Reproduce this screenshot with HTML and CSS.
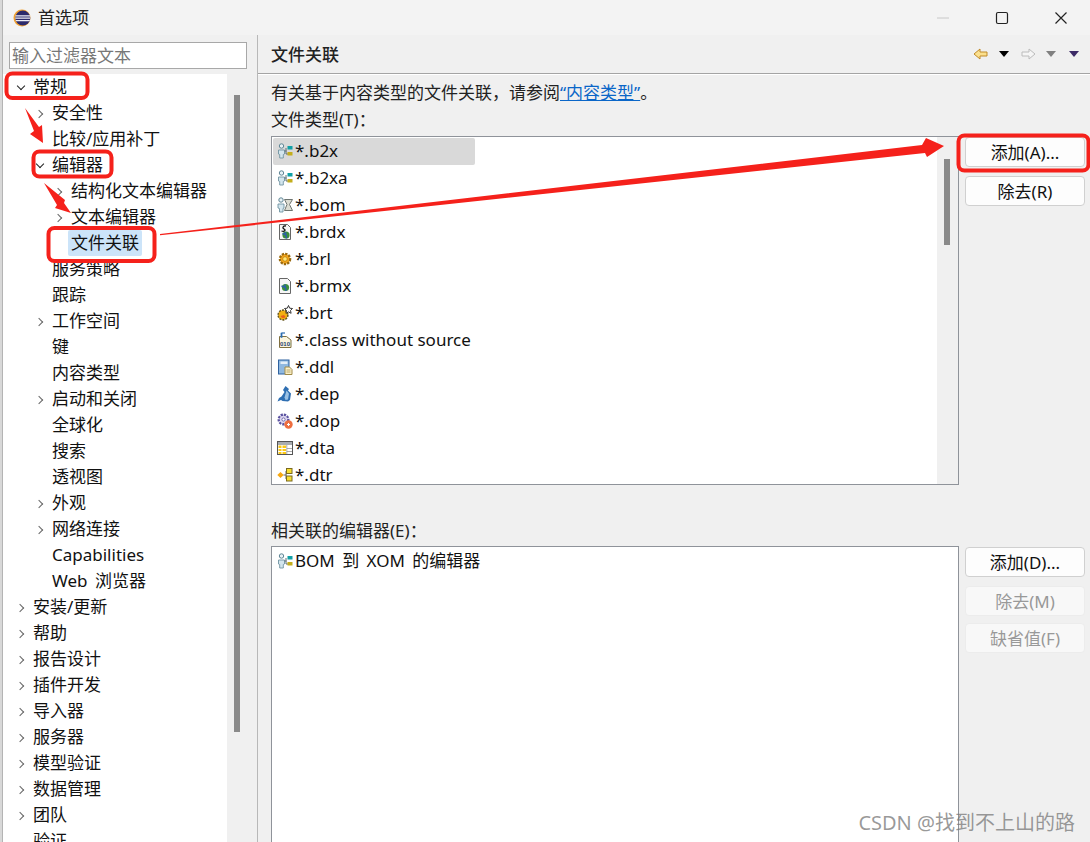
FILE: index.html
```html
<!DOCTYPE html>
<html lang="zh-CN">
<head>
    <meta charset="UTF-8">
    <title>首选项</title>
    <link rel="stylesheet" href="styles.css">
</head>
<body>
    <svg class="defs" width="0" height="0">
        <symbol id="i-person" viewBox="0 0 16 16">
            <circle cx="4.500" cy="3" r="2.200" fill="#e8f2f6" stroke="#5f8494"/>
            <path d="M1.500 7h6v4l-1.200 .5V15H2.700v-3.500L1.500 11z" fill="#d4e6ee" stroke="#6f93a2" stroke-width=".9"/>
            <path d="M7.500 8h2M9 5v6h2" fill="none" stroke="#5f6c72"/>
            <rect x="10.500" y="3" width="5" height="3.500" fill="#10a0a6"/>
            <rect x="10.500" y="9" width="5" height="3.500" fill="#c4ae1c"/>
        </symbol>
    </svg>

    <div class="dialog">
        <header class="titlebar">
            <svg class="app-icon" viewBox="0 0 18 18" width="18" height="18">
                <circle cx="9" cy="9" r="8.500" fill="#f0a030"/>
                <circle cx="9.800" cy="9" r="7.500" fill="#2c2a6b"/>
                <path d="M2.500 6.800h14.500M2.300 9.200h15M2.800 11.600h14" stroke="#eeeef6" stroke-width="1.300"/>
            </svg>
            <span class="title">首选项</span>
            <div class="win-controls">
                <svg width="14" height="14" viewBox="0 0 14 14"><path d="M1 7h12" stroke="#c8c8c8"/></svg>
                <svg width="14" height="14" viewBox="0 0 14 14"><rect x="1.500" y="1.500" width="11" height="11" rx="1.500" fill="none" stroke="#222" stroke-width="1.200"/></svg>
                <svg width="14" height="14" viewBox="0 0 14 14"><path d="M1.500 1.500l11 11M12.500 1.500l-11 11" stroke="#222" stroke-width="1.200"/></svg>
            </div>
        </header>

        <div class="main">
            <aside class="sidebar">
                <input class="filter" type="text" placeholder="输入过滤器文本">
                <div class="tree-wrap">
                    <ul class="tree">
                        <li class="lv0 open">常规</li>
                        <li class="lv1 closed">安全性</li>
                        <li class="lv1">比较/应用补丁</li>
                        <li class="lv1 open">编辑器</li>
                        <li class="lv2 closed">结构化文本编辑器</li>
                        <li class="lv2 closed">文本编辑器</li>
                        <li class="lv2"><span class="current">文件关联</span></li>
                        <li class="lv1">服务策略</li>
                        <li class="lv1">跟踪</li>
                        <li class="lv1 closed">工作空间</li>
                        <li class="lv1">键</li>
                        <li class="lv1">内容类型</li>
                        <li class="lv1 closed">启动和关闭</li>
                        <li class="lv1">全球化</li>
                        <li class="lv1">搜索</li>
                        <li class="lv1">透视图</li>
                        <li class="lv1 closed">外观</li>
                        <li class="lv1 closed">网络连接</li>
                        <li class="lv1">Capabilities</li>
                        <li class="lv1 spaced">Web 浏览器</li>
                        <li class="lv0 closed">安装/更新</li>
                        <li class="lv0 closed">帮助</li>
                        <li class="lv0 closed">报告设计</li>
                        <li class="lv0 closed">插件开发</li>
                        <li class="lv0 closed">导入器</li>
                        <li class="lv0 closed">服务器</li>
                        <li class="lv0 closed">模型验证</li>
                        <li class="lv0 closed">数据管理</li>
                        <li class="lv0 closed">团队</li>
                        <li class="lv0">验证</li>
                    </ul>
                    <div class="scrollbar tree-scroll"><div class="thumb"></div></div>
                </div>
            </aside>

            <section class="content">
                <div class="content-head">
                    <h1>文件关联</h1>
                    <div class="nav-icons">
                        <svg width="16" height="14" viewBox="0 0 16 14"><path d="M1 7l6-5v3h7v4H7v3z" fill="#fbe08e" stroke="#c08a28"/></svg>
                        <i class="tri black"></i>
                        <svg class="nav-fwd" width="16" height="14" viewBox="0 0 16 14"><path d="M15 7L9 2v3H2v4h7v3z" fill="#f5f5f5" stroke="#bcbcbc"/></svg>
                        <i class="tri gray"></i>
                        <i class="tri purple"></i>
                    </div>
                </div>

                <div class="content-body">
                    <p class="intro">有关基于内容类型的文件关联，请参阅<a href="#">“内容类型”</a>。</p>
                    <div class="label types-label">文件类型(T)：</div>
                    <div class="pane types-pane">
                        <div class="listbox types">
                            <ul class="items">
                                <li class="selected"><svg class="ic"><use href="#i-person"/></svg>*.b2x</li>
                                <li><svg class="ic"><use href="#i-person"/></svg>*.b2xa</li>
                                <li><svg class="ic" viewBox="0 0 16 16"><circle cx="4" cy="3" r="2.200" fill="#e8f2f6" stroke="#5f8494"/><path d="M1 7h6v4l-1 .5V15H2.500v-3.500L1 11z" fill="#d4e6ee" stroke="#6f93a2" stroke-width=".9"/><path d="M7.500 2.500h8l-3 5 3 6h-8l2.500-6z" fill="#dcdcd2" stroke="#6d7470"/></svg>*.bom</li>
                                <li><svg class="ic" viewBox="0 0 16 16"><path d="M2.500 .5h8l3 3v12h-11z" fill="#f6f6f6" stroke="#666"/><path d="M9 2C6 1.500 5 4 7 5s1 3-2.500 2" fill="none" stroke="#111" stroke-width="1.300"/><circle cx="9" cy="11" r="3.600" fill="#3a8f38"/><path d="M5.500 9.500l3.500 1.500.5 3.500M8.500 8v3" stroke="#2e60a8" stroke-width="1.600" fill="none"/></svg>*.brdx</li>
                                <li><svg class="ic" viewBox="0 0 16 16"><circle cx="8" cy="8" r="5" fill="#f6a81c" stroke="#9a6a10" stroke-width="2.600" stroke-dasharray="2.200 1.100"/><circle cx="8" cy="8" r="3.800" fill="#f6a81c"/><circle cx="8" cy="8" r="2.300" fill="#ffe878" stroke="#b87a10" stroke-width=".8"/></svg>*.brl</li>
                                <li><svg class="ic" viewBox="0 0 16 16"><path d="M2.500 .5h8l3 3v12h-11z" fill="#f6f6f6" stroke="#666"/><circle cx="8.500" cy="9.500" r="3.600" fill="#3a8f38"/><path d="M4.500 8l4 1.500.5 3.500M8 6.500v3" stroke="#2e60a8" stroke-width="1.600" fill="none"/></svg>*.brmx</li>
                                <li><svg class="ic" viewBox="0 0 16 16"><circle cx="6" cy="10" r="4.800" fill="#f2b010" stroke="#6a5a20" stroke-width="1.700" stroke-dasharray="2 1"/><circle cx="6" cy="10" r="4" fill="#f2b010"/><path d="M3.500 11a3 3 0 0 0 5 1l-1.500-2z" fill="#e8601c"/><path d="M11.500 .5l1.200 2.700 2.800.3-2 2 .6 2.800-2.600-1.400-2.600 1.400.6-2.800-2-2 2.800-.3z" fill="#fff" stroke="#222" stroke-width=".9"/></svg>*.brt</li>
                                <li><svg class="ic" viewBox="0 0 16 16"><path d="M2.500 4.500h7l4.500 3.500v7.500h-11.500z" fill="#fbf4dc" stroke="#80703e"/><path d="M4.500 .8v5" stroke="#2a6cb0" stroke-width="1.800"/><path d="M4.500 1H8" stroke="#2a6cb0" stroke-width="1.200"/><text x="3" y="13.500" class="ic-text">010</text></svg>*.class without source</li>
                                <li><svg class="ic" viewBox="0 0 16 16"><rect x="1.500" y="1" width="10.500" height="14" fill="#8fb8e0" stroke="#2f62a0"/><rect x="3.500" y="2.500" width="7" height="2.500" fill="#e4eef8"/><path d="M8 8h4.500l2.500 2.500v5H8z" fill="#fbf0c8" stroke="#a08a48"/><path d="M9.500 11h4M9.500 13h4" stroke="#a08a48" stroke-width=".7"/></svg>*.ddl</li>
                                <li><svg class="ic" viewBox="0 0 16 16"><path d="M8.500 0l3.500 3-1 1.500 3 3-1 6.500-2 1.500-5.500-.5-1.500-1-3.500 1.500 1.500-3.500 2.500-1.500 3-4.500-1.500-2z" fill="#2f6fb2"/><path d="M9.500 4.500l2.500 3-1 6-2.500.5-1-2.500z" fill="#9cc2e4"/></svg>*.dep</li>
                                <li><svg class="ic" viewBox="0 0 16 16"><circle cx="6.500" cy="6.500" r="4.800" fill="#dcd6ee" stroke="#5a52a0" stroke-width="2.400" stroke-dasharray="2.200 1"/><circle cx="6.500" cy="6.500" r="3.600" fill="#dcd6ee"/><circle cx="6.500" cy="6.500" r="1.600" fill="#fff" stroke="#5a52a0" stroke-width=".8"/><circle cx="11.500" cy="11.500" r="4.200" fill="#ee6e40"/><path d="M10 11.500h3M11.500 10v3" stroke="#fff"/></svg>*.dop</li>
                                <li><svg class="ic" viewBox="0 0 16 16"><rect x=".5" y="1.500" width="15" height="13" fill="#fff" stroke="#555"/><path d="M1 2h14v3H1z" fill="#a8acb0"/><path d="M1.500 5.500h3v2.500h-3zM5.500 5.500h3.500v2.500H5.500zM1.500 9h3v2h-3zM5.500 9h3.500v2H5.500zM1.500 12h3v2h-3zM5.500 12h3.500v2H5.500z" fill="#fbc814"/><path d="M9.800 5v9M10 8.500h5M10 11.500h5" stroke="#888" stroke-width=".7"/></svg>*.dta</li>
                                <li><svg class="ic" viewBox="0 0 16 16"><path d="M3.500 5l3.200 3-3.200 3-3.200-3z" fill="#f8a810"/><path d="M6.500 8h3M9 4v8" stroke="#666"/><rect x="9.500" y="1.500" width="5.500" height="5" fill="#f6dc30" stroke="#7a6a20"/><rect x="9.500" y="9" width="5.500" height="5" fill="#f6dc30" stroke="#7a6a20"/></svg>*.dtr</li>
                            </ul>
                            <div class="scrollbar list-scroll"><div class="thumb"></div></div>
                        </div>
                        <div class="buttons">
                            <button type="button">添加(A)...</button>
                            <button type="button">除去(R)</button>
                        </div>
                    </div>

                    <div class="label editors-label">相关联的编辑器(E)：</div>
                    <div class="pane">
                        <div class="listbox editors">
                            <ul class="items">
                                <li class="spaced"><svg class="ic"><use href="#i-person"/></svg>BOM 到 XOM 的编辑器</li>
                            </ul>
                        </div>
                        <div class="buttons">
                            <button type="button">添加(D)...</button>
                            <button type="button" disabled>除去(M)</button>
                            <button type="button" class="last" disabled>缺省值(F)</button>
                        </div>
                    </div>
                </div>
            </section>
        </div>
    </div>

    <!-- 红色标注 -->
    <svg class="marks" width="1090" height="842" viewBox="0 0 1090 842">
        <g fill="none" stroke="#f5211b" stroke-width="4">
            <rect x="6.500" y="73.500" width="81" height="24.500" rx="6"/>
            <rect x="33.500" y="151.500" width="78" height="25" rx="6"/>
            <rect x="48.500" y="228" width="106" height="33" rx="6"/>
            <rect x="958.500" y="135.500" width="130" height="35" rx="6"/>
        </g>
        <g fill="#f5211b">
            <path d="M25 108l14 19 3-2 1 18-13-9 4-3z"/>
            <path d="M44 183l21 17-1 3 7 10-16-5 2-3z"/>
            <path d="M160 234L922 145l4-7 18 8-17 11-2-4L160 235.200z"/>
        </g>
    </svg>

    <div class="watermark">CSDN @找到不上山的路</div>
</body>
</html>
```

FILE: styles.css
```css
* {
    box-sizing: border-box;
}
html, body {
    margin: 0;
    height: 842px;
    overflow: hidden;
}
body {
    position: relative;
    background-color: #d8d8d8;
    font-family: "Noto Sans", "Noto Sans CJK SC", sans-serif;
    font-size: 17px;
    color: #111;
    padding-left: 2px;
}
.defs {
    position: absolute;
}
.dialog {
    height: 842px;
    display: flex;
    flex-direction: column;
    background-color: #f0f0f0;
    border-left: 1px solid #b4b4b4;
}
.titlebar {
    height: 35px;
    flex: none;
    display: flex;
    align-items: center;
    padding-left: 10px;
    background-color: #f3f3f3;
}
.app-icon {
    margin-right: 7px;
}
.title {
    line-height: 1;
    color: #222;
}
.win-controls {
    margin-left: auto;
    display: flex;
    gap: 45px;
    padding-right: 22px;
}
.main {
    flex: 1;
    display: flex;
    min-height: 0;
}
.spaced {
    word-spacing: 3px;
}

/* 左侧 */
.sidebar {
    width: 255px;
    flex: none;
    padding: 7px 0 0 6px;
    border-right: 1px solid #b8b8b8;
}
.filter {
    display: block;
    width: 238px;
    height: 27px;
    margin-bottom: 5px;
    padding: 0 2px;
    border: 1px solid #a8a8a8;
    background-color: #fff;
    font: inherit;
    line-height: 25px;
}
.filter::placeholder {
    color: #777;
}
.tree-wrap {
    position: relative;
    margin-left: -6px;
    width: 244px;
    height: 768px;
    display: flex;
    background-color: #fff;
    overflow: hidden;
}
.tree {
    list-style: none;
    margin: 0;
    padding: 0;
    flex: 1;
    min-width: 0;
}
.tree li {
    position: relative;
    height: 26px;
    line-height: 26px;
    white-space: nowrap;
}
.lv0 {
    padding-left: 30px;
}
.lv1 {
    padding-left: 49px;
}
.lv2 {
    padding-left: 68px;
}
.closed::before, .open::before {
    content: "";
    position: absolute;
    width: 5px;
    height: 5px;
    border-right: 1px solid #666;
    border-bottom: 1px solid #666;
}
.closed::before {
    top: 11px;
    margin-left: -16px;
    transform: rotate(-45deg);
}
.open::before {
    top: 9px;
    margin-left: -15px;
    transform: rotate(45deg);
    border-color: #222;
}
.current {
    display: inline-block;
    height: 26px;
    margin-left: -3px;
    padding: 0 3px;
    background-color: #cce4f9;
    border-radius: 2px;
}
.scrollbar {
    flex: none;
    width: 20px;
    background-color: #f0f0f0;
}
.thumb {
    width: 6px;
    background-color: #8a8a8a;
}
.tree-scroll {
    padding: 21px 0 0 7px;
}
.tree-scroll .thumb {
    height: 637px;
}

/* 右侧 */
.content {
    flex: 1;
    min-width: 0;
    display: flex;
    flex-direction: column;
}
.content-head {
    height: 39px;
    flex: none;
    display: flex;
    align-items: center;
    justify-content: space-between;
    padding: 0 11px 0 13px;
    border-bottom: 1px solid #a4a4a4;
    box-shadow: 0 1px 0 #fff;
}
h1 {
    margin: 0;
    font-size: 17px;
    font-weight: 500;
    line-height: 1;
    color: #222;
}
.nav-icons {
    display: flex;
    align-items: center;
}
.tri {
    width: 0;
    height: 0;
    border-left: 5px solid transparent;
    border-right: 5px solid transparent;
    border-top: 6px solid #000;
    margin-left: 10px;
}
.tri.gray {
    border-top-color: #808080;
    margin-left: 10px;
}
.tri.purple {
    border-top-color: #3c2a66;
    margin-left: 13px;
}
.nav-fwd {
    margin-left: 11px;
}
.content-body {
    flex: 1;
    padding: 0 5px 0 13px;
    min-height: 0;
}
.intro {
    margin: 6px 0 0;
    height: 26px;
    line-height: 26px;
    color: #222;
}
.intro a {
    color: #0a66c8;
}
.label {
    height: 28px;
    line-height: 28px;
    color: #222;
}
.types-label {
    height: 30px;
}
.editors-label {
    margin-top: 32px;
    height: 29px;
}
.pane {
    display: flex;
    gap: 6px;
}
.listbox {
    flex: 1;
    min-width: 0;
    display: flex;
    background-color: #fff;
    border: 1px solid #8f939a;
    overflow: hidden;
}
.types {
    height: 349px;
}
.editors {
    height: 300px;
    border-bottom: 0;
}
.items {
    list-style: none;
    margin: 0;
    padding: 1px 0 0 1px;
    flex: 1;
}
.items li {
    width: 202px;
    height: 27px;
    line-height: 25px;
    padding-left: 22px;
    position: relative;
    white-space: nowrap;
    border-radius: 2px;
}
.items li.selected {
    background-color: #d9d9d9;
}
.ic {
    position: absolute;
    left: 4px;
    top: 5px;
    width: 16px;
    height: 16px;
}
.ic-text {
    font-family: "Liberation Sans", sans-serif;
    font-size: 6px;
    font-weight: 700;
    fill: #1f3f70;
}
.list-scroll {
    width: 21px;
    padding: 22px 0 0 7px;
}
.list-scroll .thumb {
    height: 86px;
}
.buttons {
    width: 120px;
    flex: none;
    padding-top: 1px;
    display: flex;
    flex-direction: column;
    gap: 9px;
}
.buttons button {
    height: 30px;
    padding: 0;
    background-color: #fdfdfd;
    border: 1px solid #d0d0d0;
    border-radius: 4px;
    font: inherit;
    line-height: 1;
    color: #111;
}
.buttons button:disabled {
    background-color: #f8f8f8;
    border-color: #ececec;
    color: #999;
}
.buttons .last {
    margin-top: -2px;
}

/* 标注 */
.marks {
    position: absolute;
    left: 0;
    top: 0;
    pointer-events: none;
}
.watermark {
    position: absolute;
    right: 15px;
    bottom: 6px;
    font-size: 20px;
    line-height: 26px;
    color: rgba(120, 120, 120, 0.75);
}
```
